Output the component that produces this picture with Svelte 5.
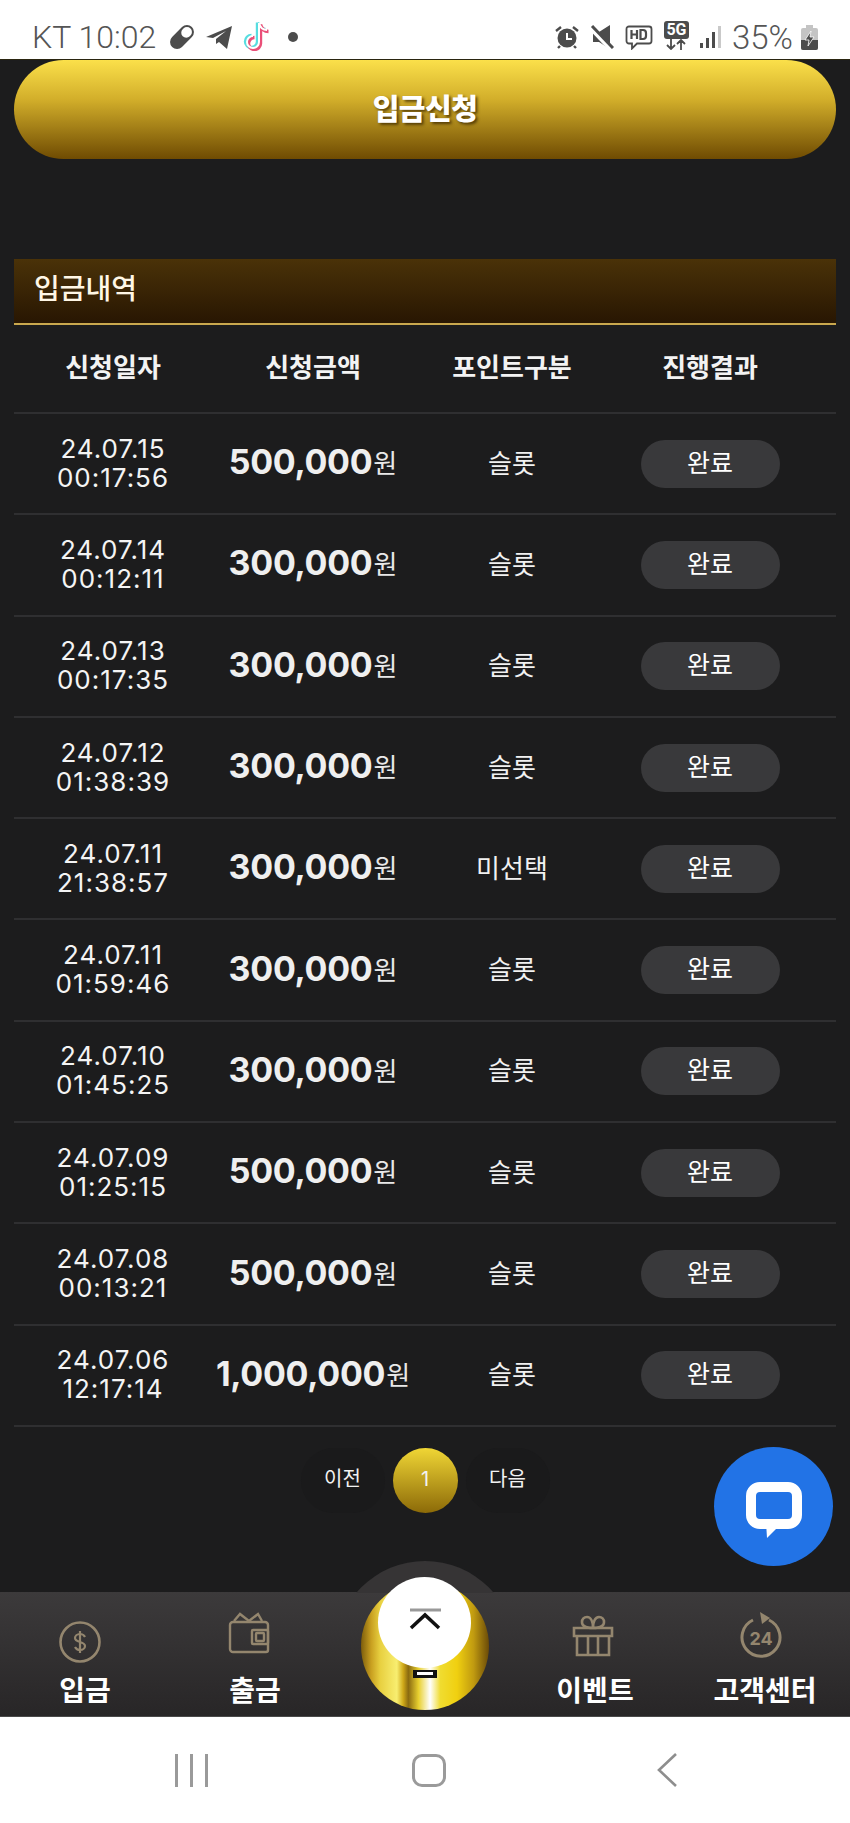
<script>
  const rows = [
    { date: '24.07.15', time: '00:17:56', amount: '500,000', type: '슬롯' },
    { date: '24.07.14', time: '00:12:11', amount: '300,000', type: '슬롯' },
    { date: '24.07.13', time: '00:17:35', amount: '300,000', type: '슬롯' },
    { date: '24.07.12', time: '01:38:39', amount: '300,000', type: '슬롯' },
    { date: '24.07.11', time: '21:38:57', amount: '300,000', type: '미선택' },
    { date: '24.07.11', time: '01:59:46', amount: '300,000', type: '슬롯' },
    { date: '24.07.10', time: '01:45:25', amount: '300,000', type: '슬롯' },
    { date: '24.07.09', time: '01:25:15', amount: '500,000', type: '슬롯' },
    { date: '24.07.08', time: '00:13:21', amount: '500,000', type: '슬롯' },
    { date: '24.07.06', time: '12:17:14', amount: '1,000,000', type: '슬롯' }
  ];
</script>

<div class="phone">
  <header class="status">
    <div class="status-left">
      <span class="clock">KT 10:02</span>
      <svg class="st-pill" width="28" height="28" viewBox="0 0 28 28"><g transform="rotate(-45 14 14)"><rect x="0" y="7" width="28" height="14" rx="7" fill="#4c4c4c"/><rect x="15" y="9" width="11" height="10" rx="5" fill="#fff"/></g></svg>
      <svg class="st-plane" width="28" height="26" viewBox="0 0 28 26"><path d="M1 13 27 2 22 25 14 18 11 20 11 15 21 7 8 14Z" fill="#4c4c4c"/></svg>
      <svg class="st-tiktok" width="27" height="31" viewBox="0 0 27 31" fill="none" stroke-width="3.4">
        <path d="M16 3v19a6 6 0 1 1-6-6M16 3c1 4 4 7 8 7" stroke="#57dde0" transform="translate(-1.5 -.5)"/>
        <path d="M16 3v19a6 6 0 1 1-6-6M16 3c1 4 4 7 8 7" stroke="#ea4f78" transform="translate(1.5 1.5)"/>
        <path d="M16 3v19a6 6 0 1 1-6-6M16 3c1 4 4 7 8 7" stroke="#fff" stroke-width="2"/>
      </svg>
      <span class="st-dot"></span>
    </div>
    <div class="status-right">
      <svg width="24" height="24" viewBox="0 0 24 24"><circle cx="12" cy="13" r="9.5" fill="#4c4c4c"/><path d="M12 8v6h5" stroke="#fff" stroke-width="2" fill="none"/><path d="M1 6l5-4M23 6l-5-4M5 21l-2 2M19 21l2 2" stroke="#4c4c4c" stroke-width="2.4"/></svg>
      <svg width="24" height="24" viewBox="0 0 24 24"><path d="M1 7h6l11-7v24L7 17H1Z" fill="#4c4c4c" transform="translate(2 0)"/><path d="M1 3l21 22" stroke="#fff" stroke-width="5"/><path d="M2 1l21 22" stroke="#4c4c4c" stroke-width="3"/></svg>
      <svg width="28" height="25" viewBox="0 0 28 25" fill="none" stroke="#4c4c4c"><path d="M4 1.500h20a2.500 2.500 0 0 1 2.500 2.500v12a2.500 2.500 0 0 1-2.500 2.500H12l-5 5v-5H4A2.500 2.500 0 0 1 1.500 16V4A2.500 2.500 0 0 1 4 1.500Z" stroke-width="1.800"/><path d="M6.500 5v9M12 5v9M6.500 9.500H12M15.500 5v9h2.500a3 3 0 0 0 3-3V8a3 3 0 0 0-3-3Z" stroke-width="2.200"/></svg>
      <div class="fiveg">
        <span class="fiveg-box">5G</span>
        <svg width="24" height="11" viewBox="0 0 24 11" fill="none" stroke="#4c4c4c" stroke-width="1.800"><path d="M7 0v10M3 6l4 4 4-4M17 11V1M13 5l4-4 4 4"/></svg>
      </div>
      <svg class="st-signal" width="21" height="23" viewBox="0 0 21 23"><rect x="0" y="17" width="3" height="5" fill="#4c4c4c"/><rect x="6" y="12" width="3" height="10" fill="#4c4c4c"/><rect x="12" y="6" width="3" height="16" fill="#4c4c4c"/><rect x="18" y="0" width="3" height="22" fill="#c9c9c9"/></svg>
      <span class="pct">35%</span>
      <svg width="17" height="25" viewBox="0 0 17 25"><path d="M5 0h7v3h3a2 2 0 0 1 2 2v18a2 2 0 0 1-2 2H2a2 2 0 0 1-2-2V5a2 2 0 0 1 2-2h3Z" fill="#c4c4c4"/><path d="M0 15h17v8a2 2 0 0 1-2 2H2a2 2 0 0 1-2-2Z" fill="#4c4c4c"/><path d="M10 6 4 15h4l-1 6 6-9H9Z" fill="#4c4c4c" stroke="#fff" stroke-width=".8"/></svg>
    </div>
  </header>

  <main class="page">
    <button class="apply">입금신청</button>

    <section class="history">
      <h2 class="history-title">입금내역</h2>
      <div class="row head">
        <div>신청일자</div>
        <div>신청금액</div>
        <div>포인트구분</div>
        <div class="col-status">진행결과</div>
      </div>
      {#each rows as row}
        <div class="row">
          <div class="date">{row.date}<br />{row.time}</div>
          <div class="amount"><strong>{row.amount}</strong><span>원</span></div>
          <div class="type">{row.type}</div>
          <div class="col-status"><span class="done">완료</span></div>
        </div>
      {/each}
    </section>

    <nav class="pager">
      <span class="page-btn">이전</span>
      <span class="page-btn current">1</span>
      <span class="page-btn">다음</span>
    </nav>

    <button class="chat" aria-label="chat">
      <svg width="56" height="56" viewBox="0 0 56 56"><rect x="5" y="5" width="46" height="37" rx="9" fill="none" stroke="#fff" stroke-width="10"/><path d="M20 40h17L21 56Z" fill="#fff"/></svg>
    </button>
  </main>

  <footer class="tabs">
    <div class="tab">
      <svg class="tab-icon ic-deposit" width="42" height="42" viewBox="0 0 42 42" fill="none" stroke="#94866e"><circle cx="21" cy="21" r="19.500" stroke-width="2.600"/><path d="M26 16c-1-2-3-3-5-3-3 0-5 2-5 4 0 5 10 3 10 8 0 2-2 4-5 4-2 0-4-1-5-3M21 10v22" stroke-width="2.200"/></svg>
      <span>입금</span>
    </div>
    <div class="tab">
      <svg class="tab-icon ic-wallet" width="42" height="42" viewBox="0 0 42 42" fill="none" stroke="#94866e" stroke-width="2.400"><path d="M5 10h32a3 3 0 0 1 3 3v25a2 2 0 0 1-2 2H5a3 3 0 0 1-3-3V13a3 3 0 0 1 3-3Z"/><path d="M6 9l6-7 9 7 9-7 4 7"/><rect x="24" y="18" width="16" height="14" rx="1"/><rect x="28" y="21" width="8" height="8" rx="1"/></svg>
      <span>출금</span>
    </div>
    <div class="tab"></div>
    <div class="tab">
      <svg class="tab-icon ic-gift" width="42" height="42" viewBox="0 0 42 42" fill="none" stroke="#94866e" stroke-width="2.600"><path d="M2 13h38v8H2ZM5 21h32v19H5ZM16 21v19M26 21v19"/><path d="M21 13c-4 0-11-1-11-6 0-3 2-5 5-5 4 0 6 5 6 11 0-6 2-11 6-11 3 0 5 2 5 5 0 5-7 6-11 6Z"/></svg>
      <span>이벤트</span>
    </div>
    <div class="tab">
      <svg class="tab-icon ic-help" width="42" height="46" viewBox="0 0 42 46" fill="none" stroke="#94866e"><path d="M29 8a19 19 0 1 1-16 0" stroke-width="3"/><path d="M20 0l10 6-8 6z" fill="#94866e" stroke="none"/><text x="21" y="33" text-anchor="middle" class="icon-24">24</text></svg>
      <span>고객센터</span>
    </div>

    <div class="hump"></div>
    <div class="gold">
      <span class="gold-mark"></span>
    </div>
    <button class="top" aria-label="top">
      <svg width="34" height="24" viewBox="0 0 34 24" fill="none"><path d="M2 2h31" stroke="#999" stroke-width="3"/><path d="M3 20 17 7l14 13" stroke="#111" stroke-width="3.500"/></svg>
    </button>
  </footer>

  <div class="sysnav">
    <div class="recent"><i></i><i></i><i></i></div>
    <div class="home"></div>
    <svg width="20" height="34" viewBox="0 0 20 34" fill="none" stroke="#8e8e8e" stroke-width="2.600"><path d="M19 1 2 17l17 16"/></svg>
  </div>
</div>

<style>
  :global(body) {
    margin: 0;
    background: #1c1c1d;
  }

  .phone {
    width: 850px;
    height: 1823px;
    overflow: hidden;
    font-family: "Inter", "Noto Sans CJK KR", sans-serif;
    color: #fff;
    position: relative;
  }

  button {
    font: inherit;
    border: none;
    padding: 0;
  }

  .status {
    height: 59px;
    background: #fff;
    display: flex;
    justify-content: space-between;
    align-items: center;
    padding: 15px 32px 0 32px;
    box-sizing: border-box;
    color: #555;
    font-family: "Roboto", sans-serif;
  }

  .status-left,
  .status-right {
    display: flex;
    align-items: center;
  }

  .clock {
    font-size: 32px;
    font-weight: 300;
    width: 136px;
    white-space: nowrap;
  }

  .st-plane { margin-left: 9px; }
  .st-tiktok { margin-left: 10px; margin-top: -4px; }

  .st-dot {
    width: 10px;
    height: 10px;
    border-radius: 50%;
    background: #4c4c4c;
    margin-left: 18px;
  }

  .status-right { gap: 11px; }

  .fiveg {
    display: flex;
    flex-direction: column;
    align-items: center;
    margin-top: -3px;
  }

  .fiveg-box {
    background: #4c4c4c;
    color: #fff;
    font-size: 16px;
    font-weight: 700;
    line-height: 18px;
    width: 25px;
    text-align: center;
    border-radius: 3px;
  }

  .pct {
    font-size: 33px;
    font-weight: 300;
    margin-right: -3px;
  }

  .page {
    height: 1533px;
    padding: 0 14px;
    box-sizing: border-box;
    background: #1c1c1d;
    border-top: 1px solid #2a2510;
    position: relative;
  }

  .apply {
    display: block;
    width: 100%;
    height: 99px;
    padding-bottom: 6px;
    border-radius: 50px;
    background: linear-gradient(180deg, #fbe04a 0%, #d2ae2a 40%, #6f4b02 100%);
    color: #fff;
    font-size: 29px;
    font-weight: 800;
    letter-spacing: -0.5px;
    text-shadow: 2px 2px 3px rgba(60, 40, 0, 0.8);
  }

  .history { margin-top: 100px; }

  .history-title {
    height: 55px;
    margin: 0;
    padding: 0 0 9px 20px;
    display: flex;
    align-items: center;
    font-size: 28px;
    font-weight: 500;
    color: #fff7e6;
    background: linear-gradient(180deg, #4a3208, #281602);
    border-bottom: 2px solid #c9a84e;
  }

  .row {
    display: grid;
    grid-template-columns: 198px 202px 196px 1fr;
    align-items: center;
    height: 101.300px;
    border-bottom: 2px solid #2f2f31;
    box-sizing: border-box;
    text-align: center;
  }

  .row.head {
    height: 89px;
    padding-bottom: 7px;
    font-size: 26px;
    font-weight: 700;
    color: #f3f3f3;
  }

  .col-status { padding-right: 26px; }

  .date {
    font-size: 26px;
    line-height: 29px;
    letter-spacing: 1px;
    color: #f4f4f4;
    padding-bottom: 2px;
  }

  .amount {
    display: flex;
    justify-content: center;
    align-items: center;
    white-space: nowrap;
    padding-bottom: 4px;
  }

  .amount strong {
    font-size: 34px;
    font-weight: 700;
    letter-spacing: -0.3px;
    color: #efefef;
  }

  .amount span {
    font-size: 26px;
    margin-left: 1px;
    color: #e8e8e8;
  }

  .type {
    font-size: 26px;
    padding-bottom: 5px;
    color: #f1f1f1;
  }

  .done {
    display: inline-block;
    width: 139px;
    height: 48px;
    line-height: 47px;
    border-radius: 24px;
    background: #39393b;
    font-size: 25px;
    color: #fff;
  }

  .pager {
    display: flex;
    justify-content: center;
    gap: 8px;
    margin-top: 21px;
  }

  .page-btn {
    width: 65px;
    height: 65px;
    line-height: 63px;
    border-radius: 50%;
    text-align: center;
    font-size: 20px;
    background: #1a1a1b;
    color: #f2f2f2;
  }

  .page-btn:first-child,
  .page-btn:last-child {
    width: 84px;
    border-radius: 33px;
  }

  .page-btn.current {
    background: linear-gradient(180deg, #f0d635, #8c6a08);
  }

  .chat {
    position: absolute;
    left: 714px;
    top: 1387px;
    width: 119px;
    height: 119px;
    padding-top: 6px;
    border-radius: 50%;
    background: #2273e6;
    display: flex;
    align-items: center;
    justify-content: center;
  }

  .tabs {
    height: 125px;
    display: flex;
    background: linear-gradient(180deg, #3c3a3b, #282627);
    position: relative;
    border-bottom: 1px solid #4a4a4a;
    box-sizing: border-box;
  }

  .tab {
    width: 170px;
    display: flex;
    flex-direction: column;
    align-items: center;
    justify-content: flex-end;
    padding-bottom: 6px;
    font-size: 28px;
    font-weight: 700;
    line-height: 38px;
    z-index: 2;
    position: relative;
  }

  .ic-deposit { margin: 0 10px 9px 0; }
  .ic-wallet { margin: 0 12px 18px 0; }
  .ic-gift { margin: 0 5px 15px 0; }
  .ic-help { margin: 0 8px 14px 0; }

  .icon-24 {
    font-size: 18px;
    font-weight: 700;
    fill: #94866e;
    stroke: none;
  }

  .hump {
    position: absolute;
    left: 335px;
    top: -31px;
    width: 180px;
    height: 32px;
    overflow: hidden;
  }

  .hump::before {
    content: '';
    display: block;
    width: 180px;
    height: 180px;
    border-radius: 50%;
    background: #363435;
  }

  .gold {
    position: absolute;
    left: 361px;
    top: -10px;
    width: 128px;
    height: 128px;
    border-radius: 50%;
    background: linear-gradient(90deg, #7d5d0c 0%, #c9a020 8%, #e8d040 15%, #f8ee70 28%, #cfa818 33%, #8a6a10 37%, #e8d030 45%, #fff 54%, #f0dc30 62%, #f0d010 75%, #c09a10 88%, #6a4a08 100%);
  }

  .gold-mark {
    position: absolute;
    left: 52px;
    top: 88px;
    width: 24px;
    height: 8px;
    box-sizing: border-box;
    background: #fff;
    border: solid #111;
    border-width: 2px 4px 3px;
  }

  .top {
    position: absolute;
    left: 378px;
    top: -15px;
    width: 93px;
    height: 91px;
    border-radius: 50%;
    background: #fff;
    display: flex;
    align-items: center;
    justify-content: center;
    padding-bottom: 6px;
  }

  .sysnav {
    height: 106px;
    background: #fff;
    position: relative;
    display: grid;
    grid-template-columns: 382px 95px 1fr;
    align-items: center;
  }

  .recent {
    display: flex;
    gap: 12px;
    justify-content: center;
    width: 382px;
  }

  .recent i {
    width: 3px;
    height: 33px;
    background: #9a9a9a;
  }

  .home {
    width: 34px;
    height: 33px;
    box-sizing: border-box;
    border: 3px solid #9a9a9a;
    border-radius: 10px;
    margin-left: 30px;
  }

  .sysnav svg { margin-left: 180px; }
</style>
